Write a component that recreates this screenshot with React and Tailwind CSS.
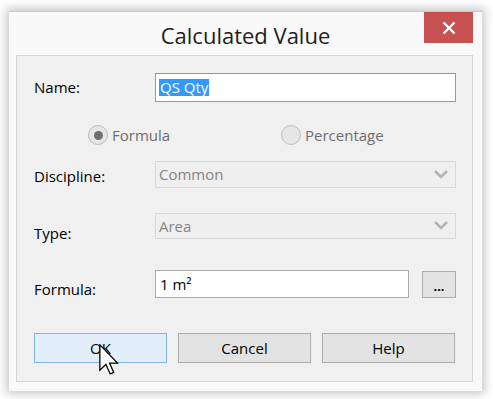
import React from "react";

const font = { fontFamily: '"Open Sans", "Noto Sans", sans-serif' };

function Chevron() {
  return (
    <svg width="14" height="10" viewBox="0 0 14 10" className="shrink-0">
      <path d="M1 1 L7 7 L13 1" fill="none" stroke="#b4b4b4" strokeWidth="2.6" />
    </svg>
  );
}

function Radio({ checked, label }) {
  return (
    <div className="flex items-center gap-[4px]">
      <div className="w-[20px] h-[20px] rounded-full border border-[#bcbcbc] bg-[#e6e6e6] flex items-center justify-center">
        {checked && <div className="w-[9px] h-[9px] rounded-full bg-[#6e6e6e]" />}
      </div>
      <span className="text-[15px] text-[#6d6d6d] leading-none">{label}</span>
    </div>
  );
}

function Cursor() {
  return (
    <svg
      width="20"
      height="31"
      viewBox="0 0 12.5 19.5"
      className="absolute left-[99px] top-[344px]"
    >
      <path
        d="M0.5 0.5 L0.5 16.5 L4.3 12.8 L7 18.8 L9.2 17.9 L6.6 12 L11.6 12 Z"
        fill="#ffffff"
        stroke="#000000"
        strokeWidth="0.8"
        strokeLinejoin="miter"
      />
    </svg>
  );
}

export default function App() {
  return (
    <div className="relative w-[493px] h-[399px] bg-white overflow-hidden" style={font}>
      <div className="ml-[9px] mt-[11px] w-[473px] h-[380px] bg-[#f9f9f9] border-t border-[#c8c8c8] shadow-[0_0_9px_3px_rgba(0,0,0,0.22)] flex flex-col">
        {/* Title bar */}
        <div className="relative h-[43px] flex items-center justify-center shrink-0">
          <span className="text-[22px] text-[#1e1e1e] leading-none pt-[3px]">Calculated Value</span>
          <div className="absolute right-[9px] top-0 w-[49px] h-[31px] bg-[#c75050] flex items-center justify-center">
            <svg width="14" height="14" viewBox="0 0 14 14">
              <path d="M1.5 1.5 L12.5 12.5 M12.5 1.5 L1.5 12.5" stroke="#ffffff" strokeWidth="2.4" />
            </svg>
          </div>
        </div>
        {/* Panel */}
        <div className="ml-[7px] mr-[9px] mb-[9px] flex-1 bg-[#f0f0f0] border border-[#d4d4d4] flex flex-col pl-[17px] pr-[16px] text-[15px] text-black">
          {/* Name */}
          <div className="mt-[17px] flex items-center h-[29px]">
            <div className="w-[121px]">Name:</div>
            <div className="flex-1 h-[29px] bg-white border border-[#6fa0da] flex items-center pl-[3px]">
              <span className="bg-[#3399ff] text-white px-[1px] leading-[17px]">QS Qty</span>
            </div>
          </div>
          {/* Radios */}
          <div className="mt-[23px] h-[20px] flex items-center">
            <div className="w-[54px]" />
            <div className="w-[193px]"><Radio checked label="Formula" /></div>
            <Radio label="Percentage" />
          </div>
          {/* Discipline */}
          <div className="mt-[16px] flex items-center h-[27px]">
            <div className="w-[121px] pt-[4px]">Discipline:</div>
            <div className="flex-1 h-[27px] bg-[#efefef] border border-[#d9d9d9] flex items-center justify-between pl-[3px] pr-[7px]">
              <span className="text-[#858585]">Common</span>
              <Chevron />
            </div>
          </div>
          {/* Type */}
          <div className="mt-[25px] flex items-center h-[26px]">
            <div className="w-[121px] pt-[14px]">Type:</div>
            <div className="flex-1 h-[26px] bg-[#efefef] border border-[#d9d9d9] flex items-center justify-between pl-[3px] pr-[7px]">
              <span className="text-[#858585]">Area</span>
              <Chevron />
            </div>
          </div>
          {/* Formula */}
          <div className="mt-[31px] flex items-center h-[28px]">
            <div className="w-[121px] pt-[10px]">Formula:</div>
            <div className="w-[254px] h-[28px] bg-white border border-[#ababab] flex items-center pl-[4px]">
              1 m²
            </div>
            <div className="ml-[13px] w-[34px] h-[27px] mt-[1px] bg-[#e3e3e3] border border-[#adadad] flex items-center justify-center text-[13px] font-bold leading-none pt-[3px]">
              ...
            </div>
          </div>
          {/* Buttons */}
          <div className="mt-[35px] flex gap-[11px] h-[30px]">
            <div className="w-[133px] h-[30px] bg-[#e2effb] border border-[#7eb4ea] flex items-center justify-center">OK</div>
            <div className="w-[133px] h-[30px] bg-[#e3e3e3] border border-[#adadad] flex items-center justify-center">Cancel</div>
            <div className="w-[133px] h-[30px] bg-[#e3e3e3] border border-[#adadad] flex items-center justify-center">Help</div>
          </div>
        </div>
      </div>
      <Cursor />
    </div>
  );
}
